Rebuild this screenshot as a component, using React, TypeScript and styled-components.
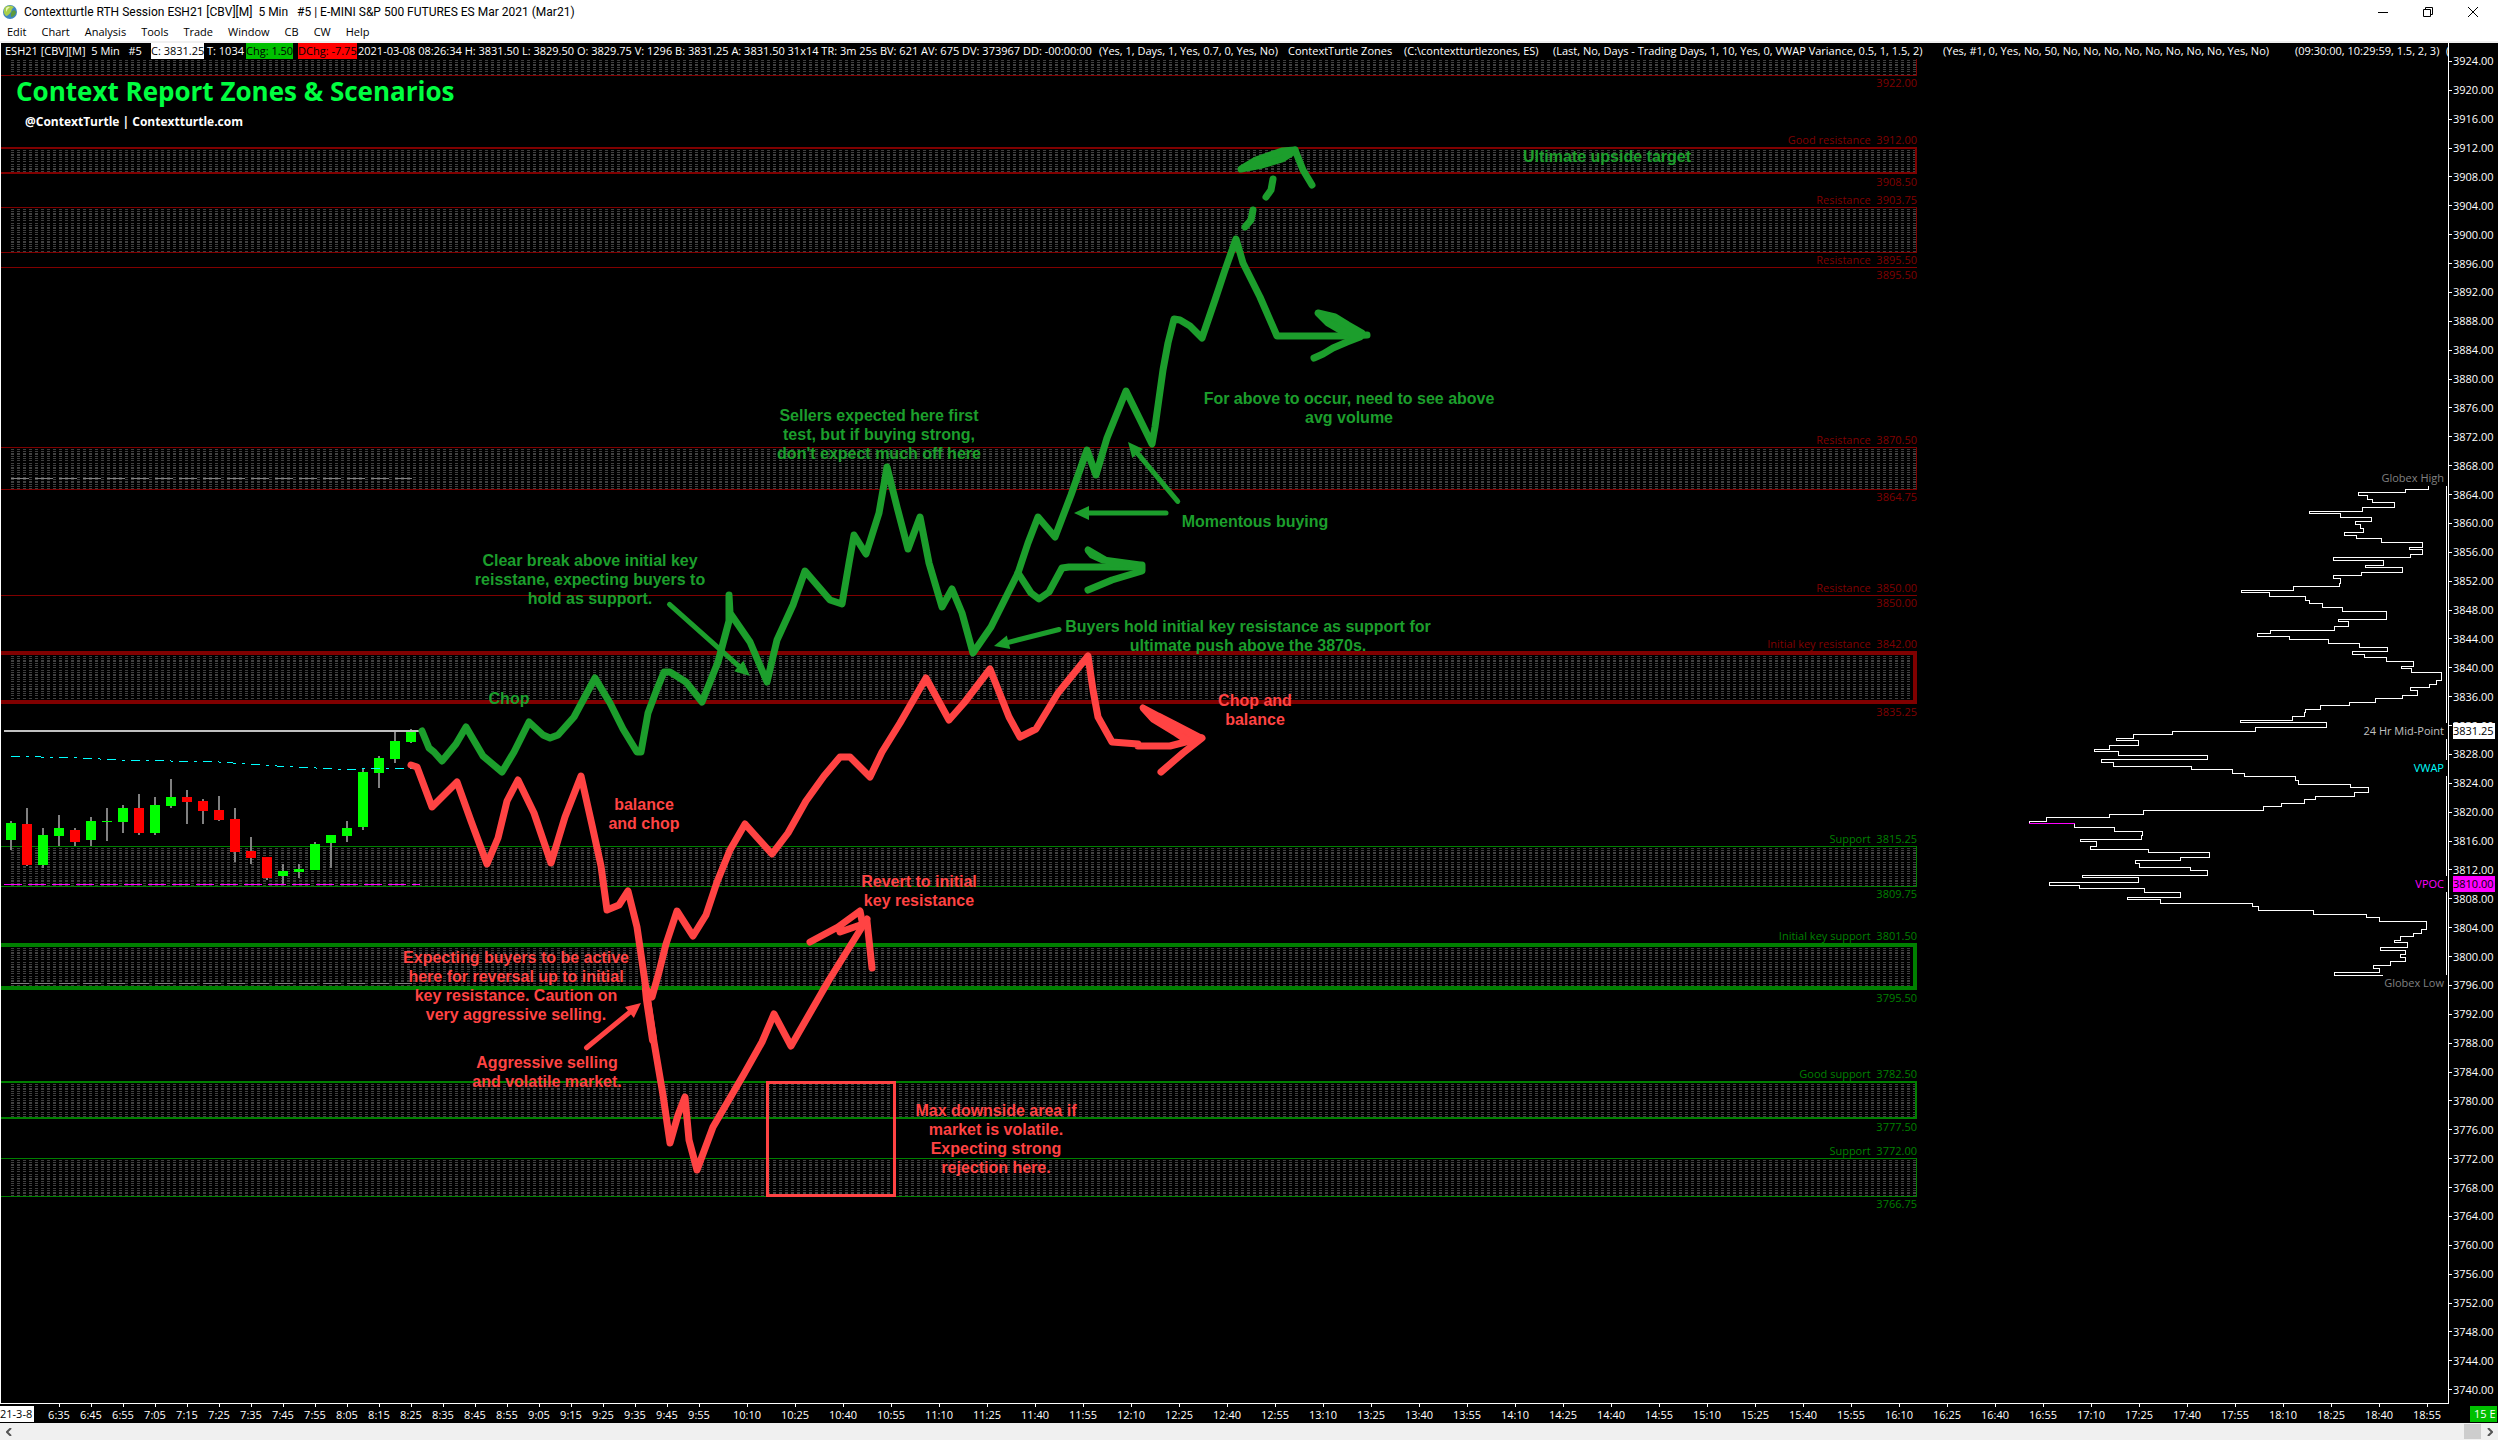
import React from "react";
import styled, { createGlobalStyle } from "styled-components";

const RED = "#ff4343";
const GREEN = "#1c9e2c";

const GlobalStyle = createGlobalStyle`
  * { box-sizing: border-box; }
  html, body, #root { height: 100%; margin: 0; }
  body {
    background: #000;
    color: #fff;
    font-family: "Open Sans", "Noto Sans", sans-serif;
    font-size: 11px;
    line-height: 16px;
    overflow: hidden;
  }
`;

const Window = styled.div`
  display: flex;
  flex-direction: column;
  height: 100vh;
`;

const TitleBar = styled.header`
  display: flex;
  align-items: center;
  height: 23px;
  padding: 0 3px 0 2px;
  background: #fff;
  color: #000;
`;

const Title = styled.h1`
  flex: 1;
  margin: 0 0 0 6px;
  font: 400 12px/16px Roboto, "Open Sans", sans-serif;
  white-space: pre;
`;

const WindowButton = styled.button`
  display: flex;
  align-items: center;
  justify-content: center;
  width: 45px;
  height: 20px;
  padding: 0;
  border: 0;
  background: none;
`;

const MenuBar = styled.nav`
  display: flex;
  align-items: center;
  gap: 15px;
  height: 20px;
  padding: 0 7px;
  background: #fff;
  border-bottom: 2px solid #f0f0f0;
`;

const MenuItem = styled.button`
  padding: 0;
  border: 0;
  background: none;
  color: #000;
  font: inherit;
`;

const Chart = styled.main`
  display: flex;
  flex: 1;
  min-height: 0;
`;

const Plot = styled.section`
  position: relative;
  flex: 1;
  min-width: 0;
  overflow: hidden;
  border: solid #fff;
  border-width: 0 1px 1px 1px;
`;

const InfoLine = styled.div`
  position: relative;
  display: grid;
  grid-template-columns: 146px 56px 39px 52px 60px 741px 189px 116px 149px 390px 352px 151px 1fr;
  justify-items: start;
  height: 16px;
  padding-left: 4px;
  background: #000;
  white-space: pre;
`;

const InfoCell = styled.span<{ $bg?: string; $fg?: string }>`
  background: ${(p) => p.$bg ?? "none"};
  color: ${(p) => p.$fg ?? "#fff"};
`;

const Heading = styled.div`
  position: relative;
  display: inline-block;
  padding: 14px 15px;
`;

const ReportTitle = styled.h2`
  margin: 0;
  color: #00ff40;
  font-size: 26px;
  font-weight: 700;
  line-height: 36px;
`;

const Byline = styled.p`
  margin: 5px 0 0 9px;
  font-size: 12px;
  font-weight: 700;
`;

const Zone = styled.div<{ $color: string; $weight: number }>`
  position: absolute;
  left: 0;
  width: 1916px;
  border: ${(p) => p.$weight}px solid ${(p) => p.$color};
  border-left: 0;
`;

const Hatch = styled.div`
  height: 100%;
  margin-left: 10px;
  background-image: repeating-linear-gradient(90deg, transparent 0 3px, #000 3px 6px),
    repeating-linear-gradient(
      #000 0 1px, #404040 1px 2px, #000 2px 3px, #404040 3px 4px, #000 4px 5px, #404040 5px 7px,
      #000 7px 8px, #404040 8px 9px, #000 9px 10px, #404040 10px 11px, #000 11px 12px, #404040 12px 13px, #000 13px 14px
    );
`;

const LevelLabel = styled.span<{ $color: string; $below?: boolean }>`
  position: absolute;
  left: 1916px;
  padding-left: 2px;
  line-height: 14px;
  background: #000;
  color: ${(p) => p.$color};
  white-space: pre;
  transform: translate(-100%, ${(p) => (p.$below ? "1px" : "-100%")});
`;

const Drawing = styled.svg`
  position: absolute;
  inset: 0;
  width: 100%;
  height: 100%;
`;

const Note = styled.p<{ $color: string }>`
  position: absolute;
  margin: 0;
  color: ${(p) => p.$color};
  font: 700 16px/19px "Liberation Sans", Arial, sans-serif;
  text-align: center;
  white-space: pre;
  transform: translateX(-50%);
`;

const StudyLabel = styled.span<{ $color: string }>`
  position: absolute;
  right: 0;
  padding-right: 4px;
  background: #000;
  color: ${(p) => p.$color};
  transform: translateY(-50%);
`;

const PriceAxis = styled.aside`
  position: relative;
  display: flex;
  flex-direction: column;
  width: 49px;
  padding-top: 4px;
`;

const Price = styled.span`
  display: flex;
  flex: 1;
  align-items: center;
  gap: 1px;
  &::before {
    content: "";
    width: 3px;
    height: 1px;
    background: #fff;
  }
`;

const PriceTag = styled.span<{ $bg: string }>`
  position: absolute;
  left: 4px;
  padding-right: 1px;
  background: ${(p) => p.$bg};
  color: #000;
  transform: translateY(-50%);
`;

const TimeAxis = styled.footer`
  display: flex;
  height: 19px;
`;

const DateTag = styled.span`
  align-self: center;
  width: 34px;
  margin-right: 9px;
  background: #fff;
  color: #000;
`;

const Times = styled.div<{ $step: number; $after?: number }>`
  display: flex;
  margin-right: ${(p) => p.$after ?? 0}px;
  span {
    display: flex;
    flex-direction: column;
    align-items: center;
    width: ${(p) => p.$step}px;
    line-height: 15px;
  }
  span::before {
    content: "";
    width: 1px;
    height: 3px;
    background: #fff;
  }
`;

const BarTag = styled.span`
  align-self: center;
  width: 27px;
  margin: 0 1px 0 auto;
  padding-left: 4px;
  background: #00c000;
`;

const ScrollBar = styled.div`
  display: flex;
  align-items: center;
  height: 17px;
  background: #f0f0f0;
`;

const ScrollButton = styled.button`
  display: flex;
  align-items: center;
  justify-content: center;
  width: 17px;
  height: 17px;
  padding: 0;
  border: 0;
  background: none;
`;

const ScrollThumb = styled.div`
  width: 17px;
  height: 15px;
  margin-left: auto;
  background: #cdcdcd;
`;

const PLOT_TOP = 43;
const priceY = (price: number) => Math.round(61 - PLOT_TOP + ((3924 - price) * 1328) / 184);

const MAROON = "#800000";
const FOREST = "#008000";

type ZoneData = { name: string; top: number; bottom: number; color: string; weight: number; hideBottom?: boolean };

const zones: ZoneData[] = [
  { name: "", top: 3924.25, bottom: 3922, color: MAROON, weight: 1 },
  { name: "Good resistance", top: 3912, bottom: 3908.5, color: MAROON, weight: 2 },
  { name: "Resistance", top: 3903.75, bottom: 3897.5, color: MAROON, weight: 1, hideBottom: true },
  { name: "Resistance", top: 3895.5, bottom: 3895.5, color: MAROON, weight: 1 },
  { name: "Resistance", top: 3870.5, bottom: 3864.75, color: MAROON, weight: 1 },
  { name: "Resistance", top: 3850, bottom: 3850, color: MAROON, weight: 1 },
  { name: "Initial key resistance", top: 3842, bottom: 3835.25, color: MAROON, weight: 4 },
  { name: "Support", top: 3815.25, bottom: 3809.75, color: FOREST, weight: 1 },
  { name: "Initial key support", top: 3801.5, bottom: 3795.5, color: FOREST, weight: 4 },
  { name: "Good support", top: 3782.5, bottom: 3777.5, color: FOREST, weight: 2 },
  { name: "Support", top: 3772, bottom: 3766.75, color: FOREST, weight: 1 },
];

const ZoneView = ({ zone }: { zone: ZoneData }) => {
  const half = Math.floor(zone.weight / 2);
  const top = priceY(zone.top) - half;
  const height = priceY(zone.bottom) - priceY(zone.top) + zone.weight;
  const flat = zone.top === zone.bottom;
  return (
    <>
      <Zone
        $color={zone.color}
        $weight={zone.weight}
        style={flat ? { top, height: 1, borderBottom: 0 } : { top, height, borderTopWidth: zone.name ? undefined : 0 }}
      >
        {!flat && <Hatch />}
      </Zone>
      {zone.name && (
        <LevelLabel $color={zone.color} style={{ top }}>
          {`${zone.name}  ${zone.top.toFixed(2)}`}
        </LevelLabel>
      )}
      {!zone.hideBottom && (
        <LevelLabel $color={zone.color} $below style={{ top: priceY(zone.bottom) + half }}>
          {zone.bottom.toFixed(2)}
        </LevelLabel>
      )}
    </>
  );
};

// body top, body bottom, wick top, wick bottom, in thirds of a pixel below y = 640
const candles: [number, number, number, number, boolean][] = [
  [549, 600, 543, 630, true], [552, 675, 504, 678, false], [585, 675, 564, 684, true],
  [564, 588, 525, 618, true], [570, 606, 564, 618, false], [543, 600, 531, 618, true],
  [543, 546, 504, 603, true], [504, 546, 495, 579, true], [504, 579, 462, 585, false],
  [495, 579, 471, 585, true], [471, 498, 417, 504, true], [471, 486, 450, 552, false],
  [483, 513, 477, 552, false], [510, 540, 468, 543, false], [537, 636, 504, 666, false],
  [633, 654, 591, 672, false], [651, 714, 651, 720, false], [693, 708, 672, 732, true],
  [687, 696, 672, 714, true], [612, 690, 606, 690, true], [585, 609, 585, 684, true],
  [564, 588, 543, 606, true], [396, 561, 387, 570, true], [354, 399, 348, 444, true],
  [303, 357, 276, 369, true], [276, 306, 267, 309, true],
];

const profileTop =
  "M1447 112H1438V115H1431V125H1386V133H1294V140H1312V150H1321V158H1365V170H1302V181H1198V186H1258V196H1319V206H1288V213H1298V223H1304V234H1266V241H1290V249H1339V259H1420V272H1394V277H1420V290H1396V297H1245V304H1343V318H1308V323H1380V335H1300V343H1245V350H1259V363H1257V371H1166V381H1064V385H1119V396H1190V406H1198V413H1223V423H1262V433H1349V454H1255V459H1274V472H1247V482H1121V489H1095V497H1158V504H1235V515H1296V525H1351V535H1282V542H1306V550H1349V560H1402V573H1378V578H1398V588H1457V608H1447V618H1433V626H1396V633H1410V646H1380V654H1327V664H1276V671H1219V682H1190V690H1188V699H1164V709H1062V714H1231V727H1091V737H928V745H852V755H818V760H862V773H805V783H775V788H822V798H997V808H789V815H812V825H966V833H1046V843H1070V851H1170V861H1176V871H1278V879H1314V892H1286V902H1209V909H1188V919H1143V927H1107V937H871V947H805V954H681V965H647V970";
const profileBottom =
  "M736 970V980H814V990H869V1000H868V1010H748V1016H779V1028H767V1035H881V1043H1001V1056H944V1063H856V1071H864V1081H964V1088H997V1102H752V1106H862V1119H687V1126H746V1134H873V1144H944V1157H840V1162H905V1172H1086V1180H1097V1190H1205V1200H1310V1207H1335V1217H1427V1238H1418V1248H1402V1255H1376V1266H1365V1271H1390V1283H1337V1291H1386V1301H1376V1308H1386V1319H1357V1329H1323V1336H1335V1346H1247V1354H1342";

const Arrow = ({ from, to, color }: { from: [number, number]; to: [number, number]; color: string }) => {
  const angle = (Math.atan2(to[1] - from[1], to[0] - from[0]) * 180) / Math.PI;
  const length = Math.hypot(to[0] - from[0], to[1] - from[1]);
  return (
    <g transform={`translate(${to[0]} ${to[1]}) rotate(${angle})`}>
      <path d={`M${-length + 2} 0H-12`} stroke={color} strokeWidth="5" strokeLinecap="round" />
      <path d="M0 0L-15 -7V7Z" fill={color} />
    </g>
  );
};

const ChartDrawing = () => (
  <Drawing aria-hidden="true">
    <g transform="translate(-1 -43)" fill="none">
      <g shapeRendering="crispEdges">
        <path d="M11 478.500H412M11 983.500H412" stroke="#808080" strokeDasharray="18 6" />
        <path d="M4 884.500H420" stroke="#f0f" strokeDasharray="18 6" />
        {candles.map(([top, bottom, high, low, up], i) => {
          const x = 11 + i * 16;
          return (
            <g key={i}>
              <rect x={x - 1} y={640 + high / 3} width="2" height={(low - high) / 3} fill="#808080" />
              <rect x={x - 5} y={640 + top / 3} width="10" height={(bottom - top) / 3} fill={up ? "#0f0" : "#f00"} />
            </g>
          );
        })}
        <path d="M4 731H420" stroke="#c0c0c0" strokeWidth="2" />
        <path d="M11 756.500L70 757.500L130 760.500L212 761.500L267 765.500L345 769.500L370 768.500H412" stroke="#0ff" strokeDasharray="9 6 3 6" />
        <path d="M2446.500 485V975" stroke="#fff" />
        <g transform="translate(1700 440) scale(0.5089 0.3954)" stroke="#fff">
          <path d={profileTop} vectorEffect="non-scaling-stroke" />
          <path d={profileBottom} vectorEffect="non-scaling-stroke" />
          <path d="M647 970H736" stroke="#f0f" vectorEffect="non-scaling-stroke" />
        </g>
      </g>

      <g stroke={GREEN} strokeWidth="7" strokeLinecap="round" strokeLinejoin="round">
        <path d="M422 731L429 748L434 752L442 761L456 744L466 727L483 756L502 772L514 752L529 722L543 735L550 738L558 735L574 717L595 678L610 703L623 729L637 752H641L648 713L657 689L664 672H670L686 682L702 702L718 662L729 621V595L730 613L750 642L767 682L777 640L793 605L805 571L830 600L842 604L849 563L854 535L866 554L879 513L887 467L897 507L908 549L920 517L929 563L942 607L952 589L962 613L973 653L991 627L1018 573L1028 543L1038 517L1055 537L1071 495L1087 450L1096 475L1107 438L1126 391L1152 444L1155 427L1163 370L1168 343L1174 319L1180 320L1190 326L1202 338L1215 300L1225 270L1236 239L1243 263L1260 297L1277 336H1350L1367 335" />
        <path d="M1318 313L1328 323L1340 330L1352 334L1362 333L1348 325L1335 317ZM1314 358L1323 354L1333 348L1347 342L1360 337" fill={GREEN} />
        <path d="M1273 179L1271 190L1266 197M1253 210L1251 220L1245 227" />
        <path d="M1241 169L1256 160L1282 151L1295 150L1290 154L1282 159L1262 165Z" fill={GREEN} />
        <path d="M1295 150L1303 170L1312 185" />
        <path d="M1018 573L1031 593L1039 599L1049 592L1062 568L1069 567H1141" />
        <path d="M1088 550L1092 555L1103 560L1140 565L1112 564Z" fill={GREEN} />
        <path d="M1088 590L1112 580L1142 571V565" />
      </g>
      <Arrow from={[668, 603]} to={[750, 676]} color={GREEN} />
      <Arrow from={[1061, 629]} to={[994, 646]} color={GREEN} />
      <Arrow from={[1168, 513]} to={[1074, 513]} color={GREEN} />
      <Arrow from={[1179, 503]} to={[1128, 442]} color={GREEN} />

      <g stroke={RED} strokeWidth="7" strokeLinecap="round" strokeLinejoin="round">
        <path d="M411 765L417 767L432 807L457 782L471 821L487 864L498 838L507 801L518 780L534 813L551 863L565 817L581 776L592 825L601 866L607 910L619 905L628 891L637 927L646 989L654 1042L663 1095L670 1143L678 1115L685 1097L689 1140L697 1170L713 1127L744 1074L762 1042L774 1014L791 1046L829 980L867 919" />
        <path d="M646 989L652 997L659 972L666 944L677 911L693 936L706 915L717 882L730 850L745 824L772 854L788 833L806 801L824 776L840 757H850L870 777L882 752L900 723L926 678L949 720L964 703L990 669L1009 717L1020 737L1036 729L1058 693L1088 656L1093 690L1098 717L1112 742L1138 744L1138 746H1170L1201 738" />
        <path d="M810 942L838 927L860 911L862 921L866 923L840 932M867 921L872 968" />
        <path d="M646 990L647 1000L653 1040" strokeWidth="8" />
        <path d="M1143 708L1153 719L1176 733L1188 741L1201 738L1176 725L1158 716Z" fill={RED} />
        <path d="M1161 772L1183 753L1202 738" />
      </g>
      <Arrow from={[585, 1049]} to={[641, 1003]} color={RED} />
      <rect x="767.500" y="1082.500" width="127" height="113" stroke={RED} strokeWidth="3" />
    </g>
  </Drawing>
);

const notes: { x: number; y: number; color: string; text: string }[] = [
  { x: 1607, y: 156, color: GREEN, text: "Ultimate upside target" },
  { x: 1349, y: 398, color: GREEN, text: "For above to occur, need to see above\navg volume" },
  { x: 879, y: 415, color: GREEN, text: "Sellers expected here first\ntest, but if buying strong,\ndon't expect much off here" },
  { x: 1255, y: 521, color: GREEN, text: "Momentous buying" },
  { x: 590, y: 560, color: GREEN, text: "Clear break above initial key\nreisstane, expecting buyers to\nhold as support." },
  { x: 1248, y: 626, color: GREEN, text: "Buyers hold initial key resistance as support for\nultimate push above the 3870s." },
  { x: 509, y: 698, color: GREEN, text: "Chop" },
  { x: 1255, y: 700, color: RED, text: "Chop and\nbalance" },
  { x: 644, y: 804, color: RED, text: "balance\nand chop" },
  { x: 919, y: 881, color: RED, text: "Revert to initial\nkey resistance" },
  { x: 516, y: 957, color: RED, text: "Expecting buyers to be active\nhere for reversal up to initial\nkey resistance. Caution on\nvery aggressive selling." },
  { x: 547, y: 1062, color: RED, text: "Aggressive selling\nand volatile market." },
  { x: 996, y: 1110, color: RED, text: "Max downside area if\nmarket is volatile.\nExpecting strong\nrejection here." },
];

const studies = [
  { y: 478, color: "#808080", text: "Globex High" },
  { y: 731, color: "#c0c0c0", text: "24 Hr Mid-Point" },
  { y: 768, color: "#00ffff", text: "VWAP" },
  { y: 884, color: "#ff00ff", text: "VPOC" },
  { y: 983, color: "#808080", text: "Globex Low" },
];

const menus = ["Edit", "Chart", "Analysis", "Tools", "Trade", "Window", "CB", "CW", "Help"];

const clock = (minutes: number) => `${Math.floor(minutes / 60)}:${String(minutes % 60).padStart(2, "0")}`;
const tenMinute = Array.from({ length: 21 }, (_, i) => clock(395 + i * 10));
const quarterHour = Array.from({ length: 36 }, (_, i) => clock(610 + i * 15));
const prices = Array.from({ length: 47 }, (_, i) => (3924 - i * 4).toFixed(2));

export default function App() {
  return (
    <Window>
      <GlobalStyle />
      <TitleBar>
        <svg width="16" height="16" viewBox="0 0 16 16" aria-hidden="true">
          <circle cx="8" cy="8" r="7" fill="#3f86c0" />
          <path d="M3 3Q8 0 12 3Q9 5 9 8Q6 12 4 12Q0 8 3 3Z" fill="#a9cf4a" />
          <path d="M10 7Q14 5 14 9Q12 13 9 13Q8 10 10 7Z" fill="#5e9b3c" />
          <path d="M4 4Q6 2 8 3Q5 5 4 8Z" fill="#e9f2b8" />
        </svg>
        <Title>{"Contextturtle RTH Session ESH21 [CBV][M]  5 Min   #5 | E-MINI S&P 500 FUTURES ES Mar 2021 (Mar21)"}</Title>
        <WindowButton aria-label="Minimize">
          <svg width="10" height="10"><path d="M0 5.500H10" stroke="#000" /></svg>
        </WindowButton>
        <WindowButton aria-label="Restore">
          <svg width="10" height="10" fill="none" stroke="#000"><path d="M.5 2.500H7.500V9.500H.5ZM2.500 2.500V.5H9.500V7.500H7.500" /></svg>
        </WindowButton>
        <WindowButton aria-label="Close">
          <svg width="10" height="10" stroke="#000"><path d="M0 0L10 10M10 0L0 10" /></svg>
        </WindowButton>
      </TitleBar>
      <MenuBar>
        {menus.map((name) => (
          <MenuItem key={name}>{name}</MenuItem>
        ))}
      </MenuBar>
      <Chart>
        <Plot>
          {zones.map((zone, i) => (
            <ZoneView key={i} zone={zone} />
          ))}
          <ChartDrawing />
          <InfoLine>
            <InfoCell>{"ESH21 [CBV][M]  5 Min   #5"}</InfoCell>
            <InfoCell $bg="#fff" $fg="#000">C: 3831.25</InfoCell>
            <InfoCell>T: 1034</InfoCell>
            <InfoCell $bg="#00c000" $fg="#000">Chg: 1.50</InfoCell>
            <InfoCell $bg="#f00" $fg="#000">DChg: -7.75</InfoCell>
            <InfoCell>2021-03-08 08:26:34 H: 3831.50 L: 3829.50 O: 3829.75 V: 1296 B: 3831.25 A: 3831.50 31x14 TR: 3m 25s BV: 621 AV: 675 DV: 373967 DD: -00:00:00</InfoCell>
            <InfoCell>(Yes, 1, Days, 1, Yes, 0.7, 0, Yes, No)</InfoCell>
            <InfoCell>ContextTurtle Zones</InfoCell>
            <InfoCell>{"(C:\\contextturtlezones, ES)"}</InfoCell>
            <InfoCell>(Last, No, Days - Trading Days, 1, 10, Yes, 0, VWAP Variance, 0.5, 1, 1.5, 2)</InfoCell>
            <InfoCell>(Yes, #1, 0, Yes, No, 50, No, No, No, No, No, No, No, No, Yes, No)</InfoCell>
            <InfoCell>(09:30:00, 10:29:59, 1.5, 2, 3)</InfoCell>
            <InfoCell>(</InfoCell>
          </InfoLine>
          <Heading>
            <ReportTitle>Context Report Zones &amp; Scenarios</ReportTitle>
            <Byline>@ContextTurtle | Contextturtle.com</Byline>
          </Heading>
          {notes.map((note) => (
            <Note key={note.text} $color={note.color} style={{ left: note.x - 1, top: note.y - PLOT_TOP - 9 }}>
              {note.text}
            </Note>
          ))}
          {studies.map((study) => (
            <StudyLabel key={study.text} $color={study.color} style={{ top: study.y - PLOT_TOP }}>
              {study.text}
            </StudyLabel>
          ))}
        </Plot>
        <PriceAxis>
          {prices.map((price) => (
            <Price key={price}>{price}</Price>
          ))}
          <PriceTag $bg="#fff" style={{ top: 731 - PLOT_TOP }}>3831.25</PriceTag>
          <PriceTag $bg="#f0f" style={{ top: 884 - PLOT_TOP }}>3810.00</PriceTag>
        </PriceAxis>
      </Chart>
      <TimeAxis>
        <DateTag>21-3-8</DateTag>
        <Times $step={32} $after={8}>
          {tenMinute.map((t) => (
            <span key={t}>{t}</span>
          ))}
        </Times>
        <Times $step={48}>
          {quarterHour.map((t) => (
            <span key={t}>{t}</span>
          ))}
        </Times>
        <BarTag>15 E</BarTag>
      </TimeAxis>
      <ScrollBar>
        <ScrollButton aria-label="Scroll left">
          <svg width="6" height="8" fill="none" stroke="#555" strokeWidth="2"><path d="M5 0L1 4L5 8" /></svg>
        </ScrollButton>
        <ScrollThumb />
        <ScrollButton aria-label="Scroll right">
          <svg width="6" height="8" fill="none" stroke="#555" strokeWidth="2"><path d="M1 0L5 4L1 8" /></svg>
        </ScrollButton>
      </ScrollBar>
    </Window>
  );
}
